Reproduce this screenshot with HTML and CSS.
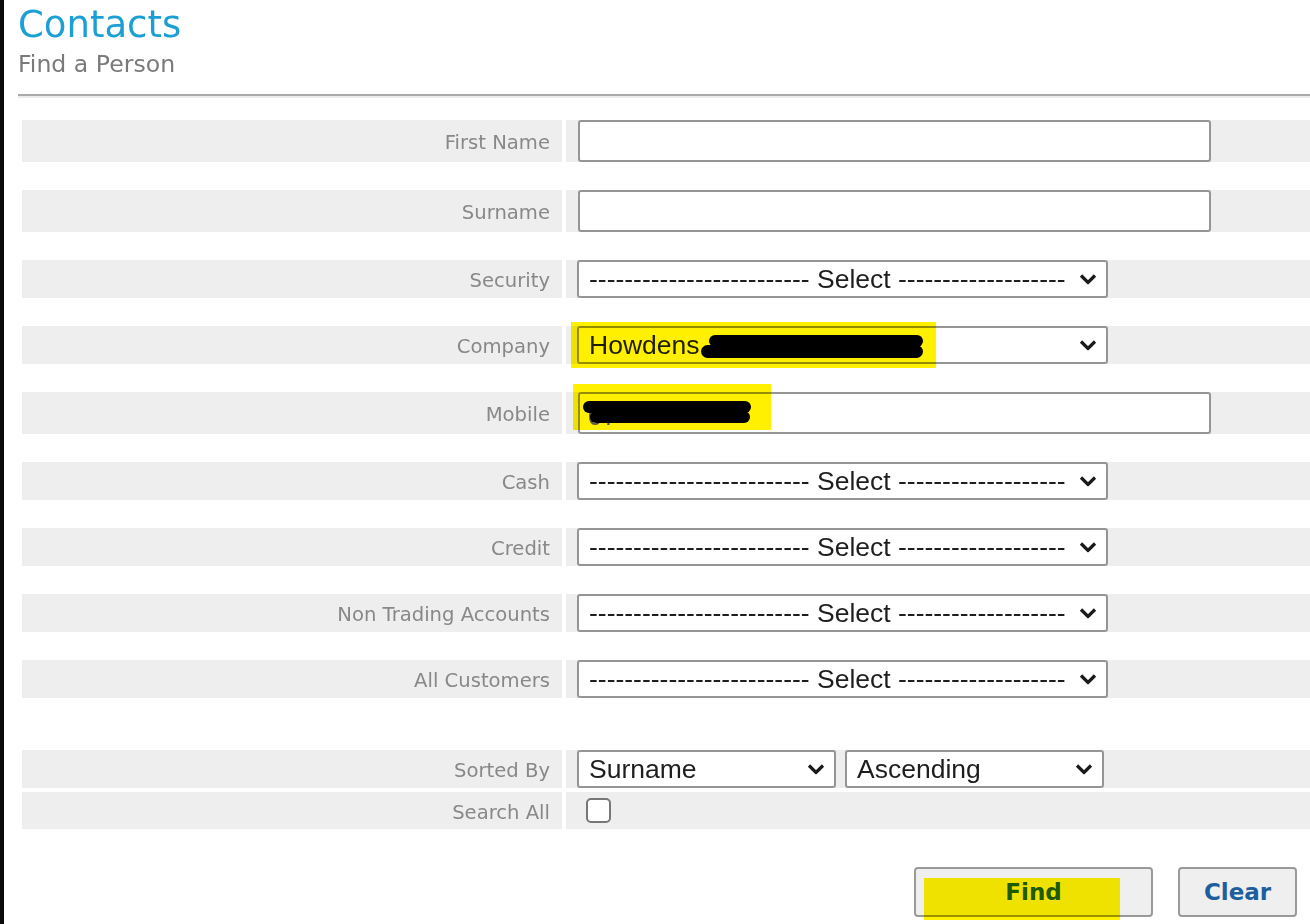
FILE: index.html
```html
<!DOCTYPE html>
<html lang="en">
<head>
  <meta charset="UTF-8" />
  <meta name="viewport" content="width=device-width, initial-scale=1.0"/>
  <title>Contacts - Find a Person</title>
  <link rel="stylesheet" href="styles.css">
</head>
<body>
  <div class="page">
    <h1 class="title">Contacts</h1>
    <div class="subtitle">Find a Person</div>
    <hr class="rule">

    <form class="search">
      <div class="row">
        <label class="label">First Name</label>
        <div class="field"><input type="text" class="text"></div>
      </div>
      <div class="row">
        <label class="label">Surname</label>
        <div class="field"><input type="text" class="text"></div>
      </div>
      <div class="row">
        <label class="label">Security</label>
        <div class="field">
          <span class="select-wrap">
            <select class="select"><option>------------------------- Select -------------------</option></select>
            <svg class="chev" viewBox="0 0 18 11"><path d="M2 2l7 7 7-7"/></svg>
          </span>
        </div>
      </div>
      <div class="row">
        <label class="label">Company</label>
        <div class="field">
          <span class="select-wrap">
            <select class="select"><option>Howdens</option></select>
            <svg class="chev" viewBox="0 0 18 11"><path d="M2 2l7 7 7-7"/></svg>
          </span>
          <span class="mark mark-company"></span>
          <span class="redact" style="left: 143px; top: 9px; width: 214px; height: 12px;"></span>
          <span class="redact" style="left: 135px; top: 19px; width: 222px; height: 13px;"></span>
        </div>
      </div>
      <div class="row">
        <label class="label">Mobile</label>
        <div class="field">
          <input type="text" class="text">
          <span class="mark mark-mobile"></span>
          <span class="digits">07</span>
          <span class="redact" style="left: 17px; top: 9px; width: 168px; height: 12px;"></span>
          <span class="redact" style="left: 24px; top: 19px; width: 160px; height: 12px;"></span>
        </div>
      </div>
      <div class="row">
        <label class="label">Cash</label>
        <div class="field">
          <span class="select-wrap">
            <select class="select"><option>------------------------- Select -------------------</option></select>
            <svg class="chev" viewBox="0 0 18 11"><path d="M2 2l7 7 7-7"/></svg>
          </span>
        </div>
      </div>
      <div class="row">
        <label class="label">Credit</label>
        <div class="field">
          <span class="select-wrap">
            <select class="select"><option>------------------------- Select -------------------</option></select>
            <svg class="chev" viewBox="0 0 18 11"><path d="M2 2l7 7 7-7"/></svg>
          </span>
        </div>
      </div>
      <div class="row">
        <label class="label">Non Trading Accounts</label>
        <div class="field">
          <span class="select-wrap">
            <select class="select"><option>------------------------- Select -------------------</option></select>
            <svg class="chev" viewBox="0 0 18 11"><path d="M2 2l7 7 7-7"/></svg>
          </span>
        </div>
      </div>
      <div class="row">
        <label class="label">All Customers</label>
        <div class="field">
          <span class="select-wrap">
            <select class="select"><option>------------------------- Select -------------------</option></select>
            <svg class="chev" viewBox="0 0 18 11"><path d="M2 2l7 7 7-7"/></svg>
          </span>
        </div>
      </div>

      <div class="row spaced">
        <label class="label">Sorted By</label>
        <div class="field sort">
          <span class="select-wrap">
            <select class="select small"><option>Surname</option></select>
            <svg class="chev" viewBox="0 0 18 11"><path d="M2 2l7 7 7-7"/></svg>
          </span>
          <span class="select-wrap">
            <select class="select small"><option>Ascending</option></select>
            <svg class="chev" viewBox="0 0 18 11"><path d="M2 2l7 7 7-7"/></svg>
          </span>
        </div>
      </div>
      <div class="row tight">
        <label class="label">Search All</label>
        <div class="field"><input type="checkbox" class="check"></div>
      </div>
    </form>

    <div class="actions">
      <button class="btn find" type="button">Find<span class="mark mark-find"></span></button>
      <button class="btn clear" type="button">Clear</button>
    </div>
  </div>
</body>
</html>
```

FILE: styles.css
```css
* { margin: 0; padding: 0; box-sizing: border-box; }
html, body { height: 100%; background-color: white; overflow: hidden; }
body {
  border-left: 4px solid #0a0a0a;
  font-family: "DejaVu Sans", Verdana, sans-serif;
}

.page {
  padding-left: 14px;
}

.title {
  margin-top: 3px;
  font-size: 37px;
  line-height: 44px;
  font-weight: normal;
  color: #1b9fd5;
}
.subtitle {
  margin-top: 3px;
  font-size: 23.6px;
  line-height: 28px;
  color: #7a7a7a;
}

.rule {
  margin-top: 16px;
  height: 4px;
  border: none;
  border-top: 2px solid #a9a9a9;
  border-bottom: 2px solid #ececec;
}

.search {
  display: flex;
  flex-direction: column;
  margin-top: 22px;
}
.row {
  display: flex;
  gap: 4px;
  margin-left: 4px;
}
.row + .row { margin-top: 28px; }
.row.spaced { margin-top: 52px; }
.row.tight { margin-top: 4px; }

.label {
  width: 540px;
  flex: none;
  display: flex;
  align-items: center;
  justify-content: flex-end;
  padding-top: 3px;
  padding-right: 12px;
  background-color: #eeeeee;
  font-size: 19.6px;
  color: #888;
}
.field {
  flex: 1;
  position: relative;
  display: flex;
  align-items: center;
  padding-left: 12px;
  background-color: #eeeeee;
}

.text {
  width: 633px;
  height: 42px;
  border: 2px solid #959595;
  border-radius: 3px;
  background: white;
  font-family: "Liberation Sans", Arial, sans-serif;
  font-size: 26px;
  outline: none;
}

.select-wrap {
  position: relative;
  display: inline-block;
  margin-left: -1px;
}
.select {
  -webkit-appearance: none;
  appearance: none;
  display: block;
  width: 531px;
  height: 38px;
  padding-left: 10px;
  border: 2px solid #959595;
  border-radius: 3px;
  background: white;
  color: #1e1e1e;
  font-family: "Liberation Sans", Arial, sans-serif;
  font-size: 26.5px;
  outline: none;
}
.select.small { width: 259px; }
.sort { gap: 10px; }

.chev {
  position: absolute;
  right: 11px;
  top: 50%;
  width: 18px;
  height: 11px;
  transform: translateY(-50%);
  fill: none;
  stroke: #1a1a1a;
  stroke-width: 3.2;
  pointer-events: none;
}

.check {
  -webkit-appearance: none;
  appearance: none;
  width: 25px;
  height: 25px;
  margin: 6px 0 6px 8px;
  border: 2px solid #777;
  border-radius: 5px;
  background: white;
}

/* marker pen and redaction on top of the fields */
.mark {
  position: absolute;
  background-color: #fff000;
  mix-blend-mode: multiply;
  pointer-events: none;
}
.mark-company { left: 5px; top: -4px; width: 365px; height: 46px; }
.mark-mobile { left: 7px; top: -8px; width: 198px; height: 46px; }
.mark-find { left: 8px; top: 9px; width: 196px; height: 42px; }

.digits {
  position: absolute;
  left: 22px;
  top: 9px;
  font-family: "Liberation Sans", Arial, sans-serif;
  font-size: 26px;
  color: #555;
}

.redact {
  position: absolute;
  background-color: #000;
  border-radius: 7px;
}

.actions {
  display: flex;
  justify-content: flex-end;
  gap: 25px;
  margin-top: 38px;
  padding-right: 13px;
}
.btn {
  position: relative;
  height: 50px;
  border: 2px solid #9a9a9a;
  border-radius: 4px;
  background-color: #efefef;
  color: #1d5f9e;
  font-family: "DejaVu Sans", Verdana, sans-serif;
  font-size: 23px;
  font-weight: bold;
}
.btn.find { width: 239px; }
.btn.clear { width: 119px; }
```
